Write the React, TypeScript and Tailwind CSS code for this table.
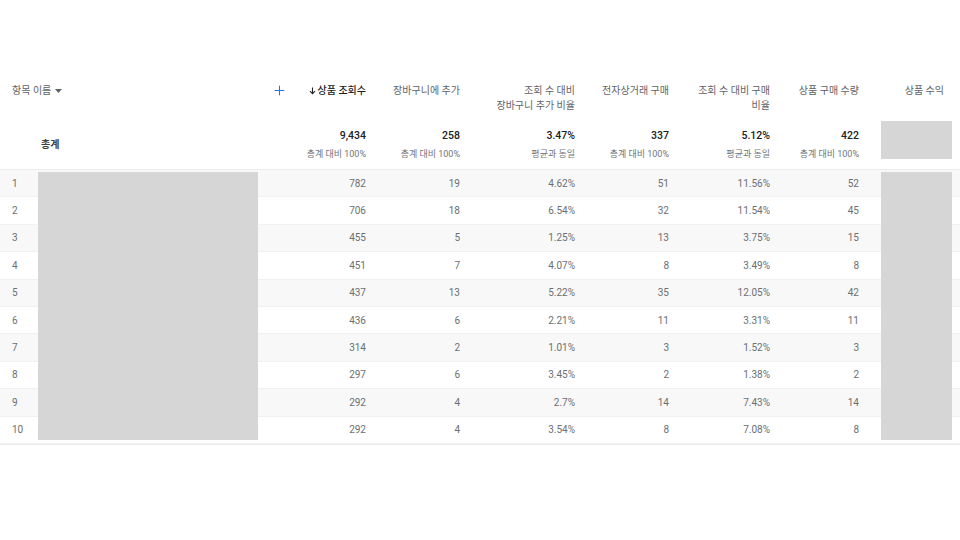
import { Plus } from "lucide-react"

const font = { fontFamily: 'Roboto, "Noto Sans CJK KR", sans-serif' }

const rows: [number, string, string, string, string, string, string][] = [
  [1, "782", "19", "4.62%", "51", "11.56%", "52"],
  [2, "706", "18", "6.54%", "32", "11.54%", "45"],
  [3, "455", "5", "1.25%", "13", "3.75%", "15"],
  [4, "451", "7", "4.07%", "8", "3.49%", "8"],
  [5, "437", "13", "5.22%", "35", "12.05%", "42"],
  [6, "436", "6", "2.21%", "11", "3.31%", "11"],
  [7, "314", "2", "1.01%", "3", "1.52%", "3"],
  [8, "297", "6", "3.45%", "2", "1.38%", "2"],
  [9, "292", "4", "2.7%", "14", "7.43%", "14"],
  [10, "292", "4", "3.54%", "8", "7.08%", "8"],
]

// widths of the numeric columns (상품 조회수 … 상품 구매 수량)
const numCols = ["w-[83px]", "w-[94px]", "w-[115px]", "w-[94px]", "w-[101px]", "w-[89px]"]

const totals = [
  { value: "9,434", sub: "총계 대비 100%" },
  { value: "258", sub: "총계 대비 100%" },
  { value: "3.47%", sub: "평균과 동일" },
  { value: "337", sub: "총계 대비 100%" },
  { value: "5.12%", sub: "평균과 동일" },
  { value: "422", sub: "총계 대비 100%" },
]

function HeaderCell({ w, children }: { w: string; children: React.ReactNode }) {
  return (
    <div className={`${w} shrink-0 pr-[9px] text-right text-[10px] leading-[15px] text-[#5f6368]`}>
      {children}
    </div>
  )
}

export default function App() {
  return (
    <div className="w-[960px] h-[540px] bg-white pt-[83px]" style={font}>
      {/* header */}
      <div className="flex h-[35px] items-start">
        <div className="w-[258px] shrink-0 pl-[12px] flex items-center gap-[4px] text-[10px] leading-[15px] text-[#5f6368]">
          <span>항목 이름</span>
          <svg width="7" height="4" viewBox="0 0 7 4">
            <path d="M0 0h7L3.5 4z" fill="#5f6368" />
          </svg>
        </div>
        <div className="w-[34px] shrink-0 flex justify-start pl-[14px] h-[15px] items-center">
          <Plus size={15} strokeWidth={1.6} color="#1a73e8" />
        </div>
        <div className={`${numCols[0]} shrink-0 pr-[9px] flex justify-end items-center gap-[2px] text-[10px] leading-[15px] text-[#202124] font-medium`}>
          <svg width="7" height="8" viewBox="0 0 7 8">
            <path d="M3.5 0.5v6M1 4.2l2.5 2.6L6 4.2" stroke="#202124" strokeWidth="1.1" fill="none" />
          </svg>
          <span>상품 조회수</span>
        </div>
        <HeaderCell w={numCols[1]}>장바구니에 추가</HeaderCell>
        <HeaderCell w={numCols[2]}>
          조회 수 대비
          <br />
          장바구니 추가 비율
        </HeaderCell>
        <HeaderCell w={numCols[3]}>전자상거래 구매</HeaderCell>
        <HeaderCell w={numCols[4]}>
          조회 수 대비 구매
          <br />
          비율
        </HeaderCell>
        <HeaderCell w={numCols[5]}>상품 구매 수량</HeaderCell>
        <div className="w-[92px] shrink-0 pr-[16px] text-right text-[10px] leading-[15px] text-[#5f6368]">상품 수익</div>
      </div>

      {/* totals */}
      <div className="flex h-[52px] items-start border-b border-[#ececec]">
        <div className="w-[292px] shrink-0 pl-[41px] pt-[19px] text-[10px] leading-[16px] font-bold text-[#3c4043]">총계</div>
        {totals.map((t, i) => (
          <div key={i} className={`${numCols[i]} shrink-0 pr-[9px] pt-[10px] text-right`}>
            <div className="text-[10.5px] leading-[16px] font-medium text-[#202124]">{t.value}</div>
            <div className="mt-[2px] text-[9px] leading-[16px] text-[#70757a]">{t.sub}</div>
          </div>
        ))}
        <div className="w-[92px] shrink-0 pl-[13px] pt-[3px]">
          <div className="w-[71px] h-[38px] bg-[#d6d6d6]" />
        </div>
      </div>

      {/* rows */}
      <div className="relative border-b border-[#ececec]">
        {rows.map((r, i) => (
          <div
            key={r[0]}
            className={`flex h-[27.4px] items-center border-b border-[#f1f1f1] last:border-b-0 text-[10px] text-[#6b6f73] ${i % 2 === 0 ? "bg-[#f8f8f8]" : "bg-white"}`}
          >
            <div className="w-[38px] shrink-0 pl-[12px]">{r[0]}</div>
            <div className="w-[254px] shrink-0" />
            {r.slice(1).map((v, j) => (
              <div key={j} className={`${numCols[j]} shrink-0 pr-[9px] text-right`}>
                {v}
              </div>
            ))}
            <div className="w-[92px] shrink-0" />
          </div>
        ))}
        {/* redacted cells */}
        <div className="absolute left-[38px] top-[2px] bottom-[4px] w-[220px] bg-[#d6d6d6]" />
        <div className="absolute left-[881px] top-[2px] bottom-[4px] w-[71px] bg-[#d6d6d6]" />
      </div>
    </div>
  )
}
